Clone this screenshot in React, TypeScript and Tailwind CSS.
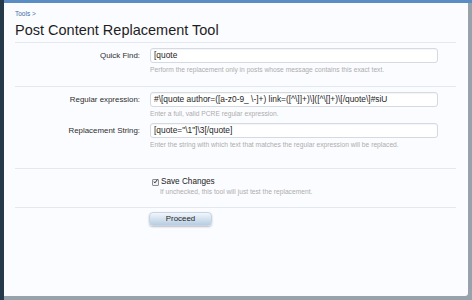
import React from "react";

const font = { fontFamily: '"Liberation Sans", Arial, sans-serif' };

function Row({ label, value }: { label: string; value: string }) {
  return (
    <div className="flex items-center h-[15px]">
      <div className="w-[125px] text-right text-[7.9px] text-[#2e2e2e] leading-[15px]">{label}</div>
      <div className="ml-[10px] w-[288px] h-[15px] bg-white border border-[#d3dae2] rounded-[3px] shadow-[inset_0_1px_1px_rgba(0,0,0,0.04)] pl-[3px] text-[8.4px] leading-[13px] text-[#1e1e1e] whitespace-nowrap overflow-hidden">
        {value}
      </div>
    </div>
  );
}

function Hint({ children, ml = "ml-[135px]" }: { children: React.ReactNode; ml?: string }) {
  return (
    <div className={`${ml} h-[8px] text-[6.7px] leading-[8px] text-[#adadad] whitespace-nowrap`}>{children}</div>
  );
}

export default function App() {
  return (
    <div style={font} className="w-[472px] h-[300px] bg-[#98a2ab] flex overflow-hidden">
      <div className="w-[4px] h-full bg-[#243a4b]" />
      <div className="flex-1 flex flex-col">
        <div className="h-[3px] bg-[#5a8dc4]" />
        <div className="flex-1 mr-[4px] mb-[4px] bg-[#fbfcff] rounded-br-[3px] pl-[11px] pr-[12px] flex flex-col">
          <div className="mt-[6px] h-[10px] leading-[10px] text-[6.5px] text-[#3b6ea5]">Tools &gt;</div>
          <div className="mt-[2px] h-[18px] leading-[18px] text-[14.5px] text-[#1e1e1e] whitespace-nowrap">
            Post Content Replacement Tool
          </div>
          <div className="mt-[3px] border-t border-[#e4e9ef]" />

          <div className="mt-[5px]">
            <Row label="Quick Find:" value="[quote" />
          </div>
          <div className="mt-[3px]">
            <Hint>Perform the replacement only in posts whose message contains this exact text.</Hint>
          </div>
          <div className="mt-[12px] border-t border-[#e4e9ef]" />

          <div className="mt-[5px]">
            <Row label="Regular expression:" value={"#\\[quote author=([a-z0-9_ \\-]+) link=([^\\]]+)\\]([^\\[]+)\\[/quote\\]#siU"} />
          </div>
          <div className="mt-[3px]">
            <Hint>Enter a full, valid PCRE regular expression.</Hint>
          </div>
          <div className="mt-[5px]">
            <Row label="Replacement String:" value={'[quote="\\1"]\\3[/quote]'} />
          </div>
          <div className="mt-[3px]">
            <Hint>Enter the string with which text that matches the regular expression will be replaced.</Hint>
          </div>
          <div className="mt-[19px] border-t border-[#e4e9ef]" />

          <div className="mt-[8px] ml-[137px] h-[10px] flex items-center">
            <div className="w-[7px] h-[7px] border border-[#8a8f94] bg-[#f2f2f2] rounded-[1px] flex items-center justify-center">
              <svg width="7" height="7" viewBox="0 0 7 7" className="-mt-[1px]">
                <path d="M1 3.6 L2.8 5.4 L6.2 0.8" stroke="#222" strokeWidth="1.3" fill="none" />
              </svg>
            </div>
            <span className="ml-[2px] text-[8.2px] leading-[10px] text-[#222]">Save Changes</span>
          </div>
          <div className="mt-[1px]">
            <Hint ml="ml-[145px]">If unchecked, this tool will just test the replacement.</Hint>
          </div>
          <div className="mt-[11px] border-t border-[#e4e9ef]" />

          <div className="mt-[4px] ml-[134px]">
            <div className="w-[63px] h-[14px] rounded-[4px] bg-gradient-to-b from-[#f1f6fb] to-[#b7cde2] border border-[#c5d5e4] shadow-[0_1px_2px_rgba(0,0,0,0.25)] flex items-center justify-center text-[7.9px] text-[#1f1f1f]">
              Proceed
            </div>
          </div>
        </div>
      </div>
    </div>
  );
}
